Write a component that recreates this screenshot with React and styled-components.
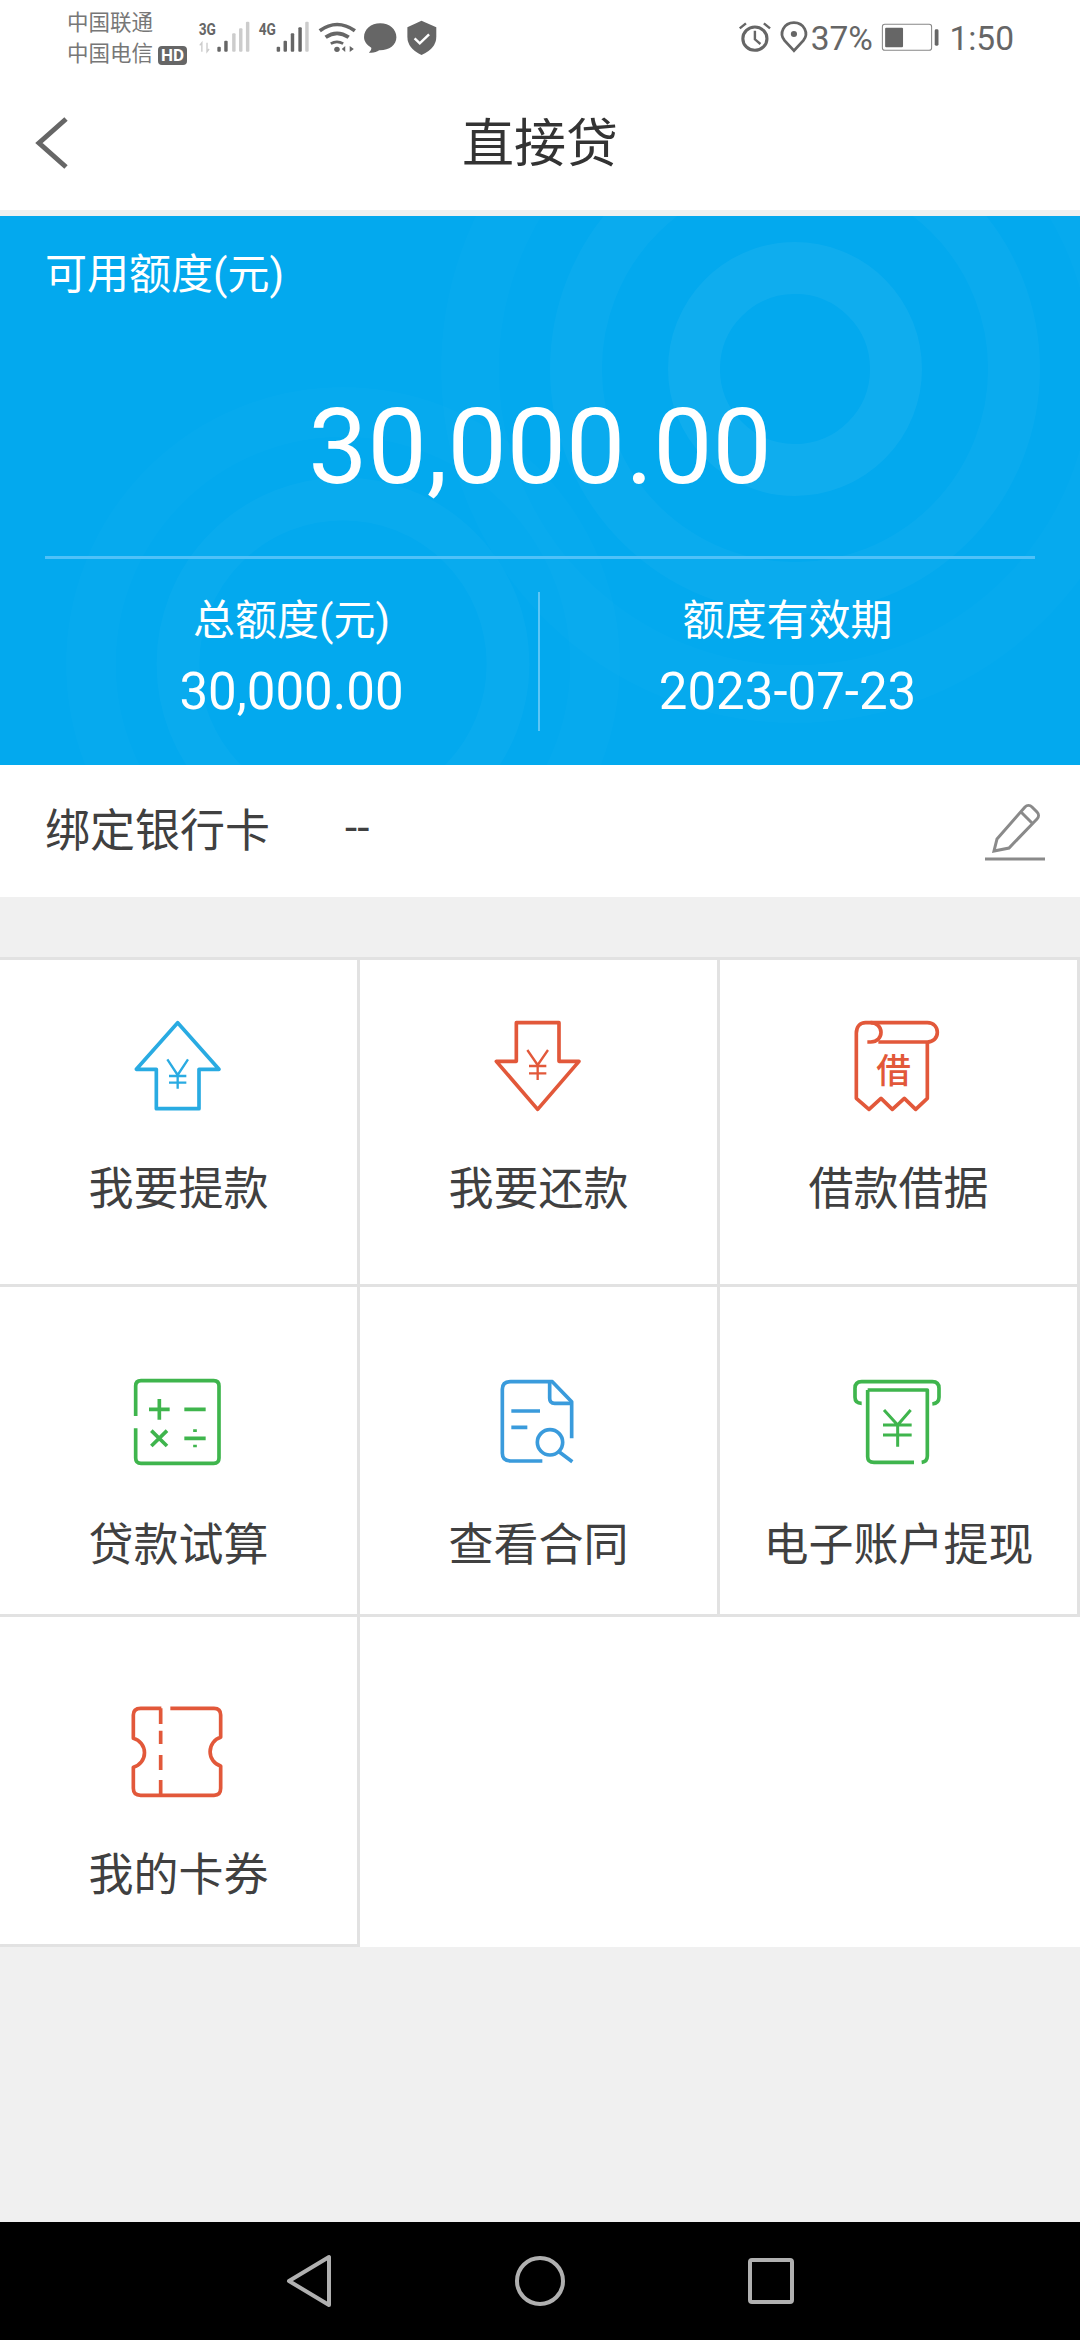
import React from "react";
import styled, { createGlobalStyle } from "styled-components";

const GlobalStyle = createGlobalStyle`
  html, body {
    margin: 0;
    padding: 0;
    background: #f0f0f0;
  }
  * {
    box-sizing: border-box;
  }
`;

const FONT = `Roboto, "Noto Sans CJK SC", sans-serif`;

const Page = styled.div`
  width: 1080px;
  height: 2340px;
  display: flex;
  flex-direction: column;
  background: #f0f0f0;
  font-family: ${FONT};
  overflow: hidden;
`;

const StatusBar = styled.div`
  height: 75px;
  flex: none;
  display: flex;
  align-items: center;
  justify-content: space-between;
  padding: 0 66px 0 67px;
  background: #fff;
  color: #666;
`;

const StatusGroup = styled.div`
  display: flex;
  align-items: center;
`;

const Carriers = styled.div`
  width: 129px;
  font-size: 21.5px;
  line-height: 31px;
  color: #777;
`;

const HdBadge = styled.span`
  display: inline-block;
  margin-left: 5px;
  padding: 0 3px;
  height: 19px;
  line-height: 19px;
  border-radius: 4px;
  background: #666;
  color: #fff;
  font-size: 17px;
  font-weight: 700;
  vertical-align: 0;
`;

const StatusIcon = styled.svg`
  display: block;
  flex: none;
  fill: none;
  stroke: #666;
  margin-left: ${({ $gap }) => $gap || 0}px;
`;

const StatusText = styled.span`
  font-size: 33.5px;
  line-height: 40px;
  padding-top: 2px;
  color: #666;
  margin-left: ${({ $gap }) => $gap || 0}px;
`;

const NavBar = styled.div`
  height: 135px;
  flex: none;
  display: flex;
  align-items: center;
  justify-content: center;
  position: relative;
  background: #fff;
  padding-top: 5px;
`;

const BackButton = styled.svg`
  position: absolute;
  left: 30px;
  top: 36px;
  fill: none;
  stroke: #666;
  stroke-width: 5;
`;

const Title = styled.div`
  font-size: 52px;
  line-height: 70px;
  color: #333;
`;

const HeaderRule = styled.div`
  height: 6px;
  flex: none;
  background: #eef1f1;
`;

const Quota = styled.section`
  height: 549px;
  flex: none;
  position: relative;
  overflow: hidden;
  padding: 29px 45px 0;
  background: #03a9ee;
  color: #fff;
`;

const Rings = styled.svg`
  position: absolute;
  left: 0;
  top: 0;
  fill: none;
  stroke: #fff;
`;

const QuotaLabel = styled.div`
  position: relative;
  font-size: 42px;
  line-height: 60px;
`;

const QuotaAmount = styled.div`
  position: relative;
  height: 251px;
  padding-top: 32px;
  display: flex;
  align-items: center;
  justify-content: center;
  font-size: 105.5px;
  line-height: 120px;
`;

const QuotaRule = styled.div`
  position: relative;
  height: 3px;
  background: #4fc1f8;
`;

const Stats = styled.div`
  position: relative;
  margin-top: 33px;
  height: 139px;
  display: grid;
  grid-template-columns: 493px 2px 1fr;
`;

const Stat = styled.div`
  display: flex;
  flex-direction: column;
  align-items: center;
`;

const StatLabel = styled.div`
  font-size: 42px;
  line-height: 58px;
`;

const StatValue = styled.div`
  margin-top: 3px;
  font-size: 51px;
  line-height: 78px;
`;

const StatRule = styled.div`
  background: #5cc6f6;
`;

const BankRow = styled.div`
  height: 132px;
  flex: none;
  display: flex;
  align-items: center;
  padding: 0 35px 7px 45px;
  background: #fff;
  color: #404040;
  font-size: 45px;
`;

const BankLabel = styled.div`
  width: 300px;
`;

const BankValue = styled.div`
  flex: 1;
  font-size: 44px;
`;

const EditIcon = styled.svg`
  fill: none;
  stroke: #8a8a8a;
  stroke-width: 3;
  margin-bottom: -7px;
`;

const Menu = styled.div`
  margin-top: 60px;
  flex: none;
  display: grid;
  grid-template-columns: repeat(3, 360px);
  background: #fff;
  border-top: 3px solid #e2e2e2;
`;

const MenuCell = styled.div`
  height: ${({ $height }) => $height}px;
  display: flex;
  flex-direction: column;
  align-items: center;
  padding-top: ${({ $top }) => $top}px;
  border-right: 3px solid #e2e2e2;
  border-bottom: 3px solid #e2e2e2;
`;

const MenuIcon = styled.svg`
  display: block;
  flex: none;
  fill: none;
  stroke: ${({ $color }) => $color};
  stroke-width: 11;
  stroke-linejoin: round;
`;

const MenuLabel = styled.div`
  margin-top: ${({ $gap }) => $gap}px;
  font-size: 45px;
  line-height: 60px;
  color: #404040;
`;

const IconGlyph = styled.text`
  font-family: ${FONT};
  font-size: 104px;
  font-weight: 500;
  stroke: none;
  fill: ${({ $color }) => $color};
`;

const BlankCell = styled.div`
  height: 330px;
`;

const Filler = styled.div`
  flex: 1;
`;

const SystemBar = styled.div`
  height: 118px;
  flex: none;
  display: flex;
  align-items: center;
  justify-content: center;
  gap: 171px;
  background: #000;
`;

const SystemIcon = styled.svg`
  fill: none;
  stroke: #b0b0b0;
  stroke-width: 4;
  stroke-linejoin: round;
`;

const BLUE = "#29abe2";
const RED = "#e2583a";
const GREEN = "#3fb54d";
const DOC_BLUE = "#3a9bdc";

// status icons are traced from a crop that was 2.904x wide and 3x tall
const tracedWidth = (w) => w / 2.904;

const Traced = ({ x, w, gap, children }) => (
  <StatusIcon $gap={gap} width={tracedWidth(w)} height="35" viewBox={`${x} 60 ${w} 105`} preserveAspectRatio="none">
    {children}
  </StatusIcon>
);

const Signal = ({ x, label, bars }) => (
  <Traced x={x} w={175}>
    <text x={x + 8} y="105" fontFamily="'Liberation Sans Narrow','Roboto',sans-serif" fontWeight="700" fontSize="50" fill="#666" stroke="none" textLength="50" lengthAdjust="spacingAndGlyphs">{label}</text>
    {bars.map((b, i) => (
      <rect key={i} x={b[0]} y={b[1]} width="10" height={155 - b[1]} rx="3" fill={b[2] ? "#ccc" : "#666"} stroke="none" />
    ))}
    {label === "3G" && <path d="M587 155V128l-6 8M602 128v27l6-8" stroke="#ccc" strokeWidth="4" />}
  </Traced>
);

const icons = {
  up: (
    <>
      <path d="M236 68L360 208H300V326H172V208H112Z" />
      <path strokeWidth="7" d="M205 178L236 225L267 178M210 228H262M210 248H262M236 225V266" />
    </>
  ),
  down: (
    <>
      <path d="M172 68H300V184H360L236 328L112 184H172Z" />
      <path strokeWidth="7" d="M205 150L236 195L267 150M210 198H262M210 220H262M236 195V240" />
    </>
  ),
  receipt: (
    <>
      <path d="M145 126H155C175 126 186 112 186 97C186 80 172 68 155 68H140C122 68 112 82 112 100V295L150 328L186 295L220 328L256 295L290 328L325 295V128" />
      <path d="M155 68H325C345 68 355 82 355 97C355 115 342 126 325 126H178" />
      <IconGlyph $color={RED} x="224" y="250" textAnchor="middle">借</IconGlyph>
    </>
  ),
  calc: (
    <>
      <path d="M110 168V78Q110 62 126 62H344Q360 62 360 78V294Q360 310 344 310H126Q110 310 110 294V205" />
      <path d="M150 148H212M181 117V179M256 148H320M157 212L204 258M204 212L157 258M256 235H320M288 208V216M288 254V262" />
    </>
  ),
  contract: (
    <>
      <path d="M250 303H155Q130 303 130 280V88Q130 65 155 65H280L338 125V235" />
      <path d="M272 68V115Q272 130 287 130H338M157 153H243M157 202H205M300 275L340 305" />
      <circle cx="273" cy="247" r="38" />
    </>
  ),
  withdraw: (
    <>
      <path d="M128 130Q108 130 108 112V85Q108 65 128 65H340Q360 65 360 85V112Q360 130 340 132" />
      <path d="M146 90H325V288Q325 305 308 307M285 307H165Q146 307 146 290V90" />
      <path strokeWidth="9" d="M195 150L236 195L275 150M192 195H278M192 225H278M236 190V260" />
    </>
  ),
  ticket: (
    <>
      <path d="M187 55H125Q103 55 103 75V145A45 45 0 0 1 103 232V295Q103 316 125 316H345Q365 316 365 295V228A45 45 0 0 1 365 142V75Q365 55 345 55H214" />
      <path d="M185 55V102M185 122V162M185 195V240M185 270V316" />
    </>
  ),
};

const menu = [
  [
    { label: "我要提款", icon: "up", color: BLUE },
    { label: "我要还款", icon: "down", color: RED },
    { label: "借款借据", icon: "receipt", color: RED },
  ],
  [
    { label: "贷款试算", icon: "calc", color: GREEN },
    { label: "查看合同", icon: "contract", color: DOC_BLUE },
    { label: "电子账户提现", icon: "withdraw", color: GREEN },
  ],
];

const Cell = ({ item, height, top, gap }) => (
  <MenuCell $height={height} $top={top}>
    <MenuIcon $color={item.color} width="160" height="120" viewBox="0 0 480 360">
      {icons[item.icon]}
    </MenuIcon>
    <MenuLabel $gap={gap}>{item.label}</MenuLabel>
  </MenuCell>
);

export default function App() {
  return (
    <Page>
      <GlobalStyle />
      <StatusBar>
        <StatusGroup>
          <Carriers>
            <div>中国联通</div>
            <div>中国电信<HdBadge>HD</HdBadge></div>
          </Carriers>
          <Signal x={570} label="3G" bars={[[632, 140], [652, 122], [675, 100, 1], [695, 85, 1], [715, 65, 1]]} />
          <Signal x={745} label="4G" bars={[[805, 140], [825, 122], [846, 100], [868, 82], [888, 65, 1]]} />
          <Traced x={920} w={135}>
            <path strokeWidth="11" d="M928 92Q978 55 1030 92M945 112Q978 88 1012 112" />
            <path strokeWidth="8" d="M960 131Q978 120 996 131" />
            <circle cx="978" cy="148" r="8" fill="#666" stroke="none" />
            <path fill="#666" stroke="none" d="M1002 138V156L992 147ZM1015 138V156L1027 147Z" />
          </Traced>
          <Traced x={1055} w={125}>
            <path fill="#666" stroke="none" d="M1105 70C1132 70 1152 88 1152 112C1152 136 1130 152 1102 151C1094 157 1084 160 1072 158C1078 152 1080 147 1079 143C1066 135 1058 124 1058 112C1058 88 1078 70 1105 70Z" />
          </Traced>
          <Traced x={1180} w={95}>
            <path fill="#666" stroke="none" d="M1225 62L1268 82V110Q1268 145 1225 165Q1184 145 1184 110V82Z" />
            <path stroke="#fff" strokeWidth="7" d="M1205 115L1220 130L1247 103" />
          </Traced>
        </StatusGroup>
        <StatusGroup>
          <Traced x={570} w={110}>
            <circle cx="622" cy="116" r="35" strokeWidth="9" />
            <path strokeWidth="7" d="M622 92V118L638 132M578 85L596 70M648 70L666 85" />
          </Traced>
          <Traced x={680} w={105}>
            <path strokeWidth="8" d="M735 152L708 122C690 100 706 68 735 68C764 68 780 100 762 122Z" />
            <circle cx="735" cy="102" r="9" fill="#666" stroke="none" />
          </Traced>
          <StatusText>37%</StatusText>
          <Traced x={995} w={170} gap={8}>
            <rect x="999" y="73" width="143" height="78" rx="7" strokeWidth="3" stroke="#888" />
            <rect x="1007" y="83" width="52" height="59" rx="3" fill="#666" stroke="none" />
            <rect x="1151" y="88" width="11" height="49" rx="4" fill="#666" stroke="none" />
          </Traced>
          <StatusText $gap={10}>1:50</StatusText>
        </StatusGroup>
      </StatusBar>

      <NavBar>
        <BackButton width="40" height="60" viewBox="30 110 40 60">
          <path d="M66 118L39 142L66 166" />
        </BackButton>
        <Title>直接贷</Title>
      </NavBar>
      <HeaderRule />

      <Quota>
        <Rings width="1080" height="549" viewBox="0 216 1080 549">
          <circle cx="795" cy="369" r="101" strokeWidth="52" strokeOpacity="0.05" />
          <circle cx="795" cy="369" r="219" strokeWidth="52" strokeOpacity="0.03" />
          <circle cx="795" cy="369" r="325" strokeWidth="58" strokeOpacity="0.015" />
          <circle cx="343" cy="664" r="165" strokeWidth="43" strokeOpacity="0.028" />
          <circle cx="343" cy="664" r="252" strokeWidth="50" strokeOpacity="0.014" />
        </Rings>
        <QuotaLabel>可用额度(元)</QuotaLabel>
        <QuotaAmount>30,000.00</QuotaAmount>
        <QuotaRule />
        <Stats>
          <Stat>
            <StatLabel>总额度(元)</StatLabel>
            <StatValue>30,000.00</StatValue>
          </Stat>
          <StatRule />
          <Stat>
            <StatLabel>额度有效期</StatLabel>
            <StatValue>2023-07-23</StatValue>
          </Stat>
        </Stats>
      </Quota>

      <BankRow>
        <BankLabel>绑定银行卡</BankLabel>
        <BankValue>--</BankValue>
        <EditIcon width="60" height="60" viewBox="0 0 60 60">
          <path d="M12 38L40 6C42 4 45 4 47 6L52 11C54 13 54 16 52 18L24 47L9 50ZM36 11L47 22" />
          <path d="M0 58H60" />
        </EditIcon>
      </BankRow>

      <Menu>
        {menu[0].map((item) => <Cell key={item.label} item={item} height={327} top={40} gap={40} />)}
        {menu[1].map((item) => <Cell key={item.label} item={item} height={330} top={73} gap={36} />)}
        <Cell item={{ label: "我的卡券", icon: "ticket", color: RED }} height={330} top={73} gap={36} />
        <BlankCell />
        <BlankCell />
      </Menu>
      <Filler />

      <SystemBar>
        <SystemIcon width="60" height="60" viewBox="0 0 60 60">
          <path d="M50 6V54L10 30Z" />
        </SystemIcon>
        <SystemIcon width="60" height="60" viewBox="0 0 60 60">
          <circle cx="30" cy="30" r="23" />
        </SystemIcon>
        <SystemIcon width="60" height="60" viewBox="0 0 60 60">
          <rect x="9" y="9" width="42" height="42" rx="2" />
        </SystemIcon>
      </SystemBar>
    </Page>
  );
}
